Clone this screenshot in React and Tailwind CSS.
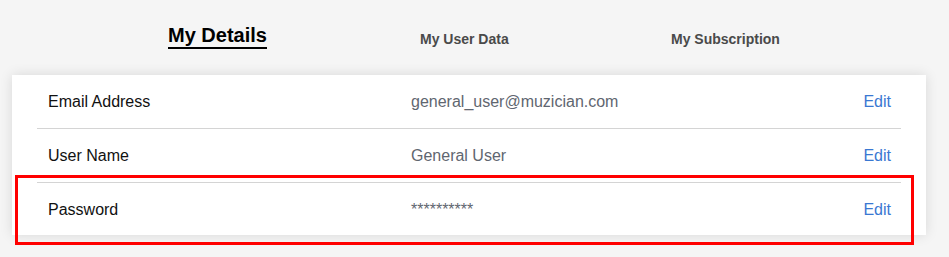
import React from 'react';

const rows = [
    { label: 'Email Address', value: 'general_user@muzician.com' },
    { label: 'User Name', value: 'General User' },
    { label: 'Password', value: '**********' },
];

const App = () => {
    return (
        <div
            className="min-h-[257px] w-full bg-[#f5f5f5] pb-4"
            style={{ fontFamily: '"Liberation Sans", Arial, sans-serif' }}
        >
            {/* Tabs */}
            <div className="flex items-start pl-[168px] pt-[23px]">
                <div className="w-[252px]">
                    <span className="inline-block border-b-2 border-black text-[20px] font-bold leading-[24px] text-black">
                        My Details
                    </span>
                </div>
                <div className="mt-[6px] w-[251px] text-[14px] font-bold leading-[20px] text-[#4a4a4a]">
                    My User Data
                </div>
                <div className="mt-[6px] text-[14px] font-bold leading-[20px] text-[#4a4a4a]">
                    My Subscription
                </div>
            </div>

            {/* Card */}
            <div className="relative ml-[12px] mt-[26px] w-[914px] bg-white px-[25px] shadow-[0_0_12px_rgba(0,0,0,0.12)]">
                {rows.map((row, i) => (
                    <div
                        key={row.label}
                        className={`flex items-center pl-[11px] pr-[10px] text-[16px] ${i === 2 ? 'h-[52px] pt-px' : 'h-[54px] border-b border-[#d4d4d4]'}`}
                    >
                        <div className="w-[363px] text-[#111]">{row.label}</div>
                        <div className="flex-1 text-[#5f6670]">{row.value}</div>
                        <button className="text-[#3a78d2]">Edit</button>
                    </div>
                ))}

                {/* highlight overlay */}
                <div className="pointer-events-none absolute left-[3px] top-[100px] h-[70px] w-[899px] border-[3px] border-[#ff0000]" />
            </div>
        </div>
    );
};

export default App;
